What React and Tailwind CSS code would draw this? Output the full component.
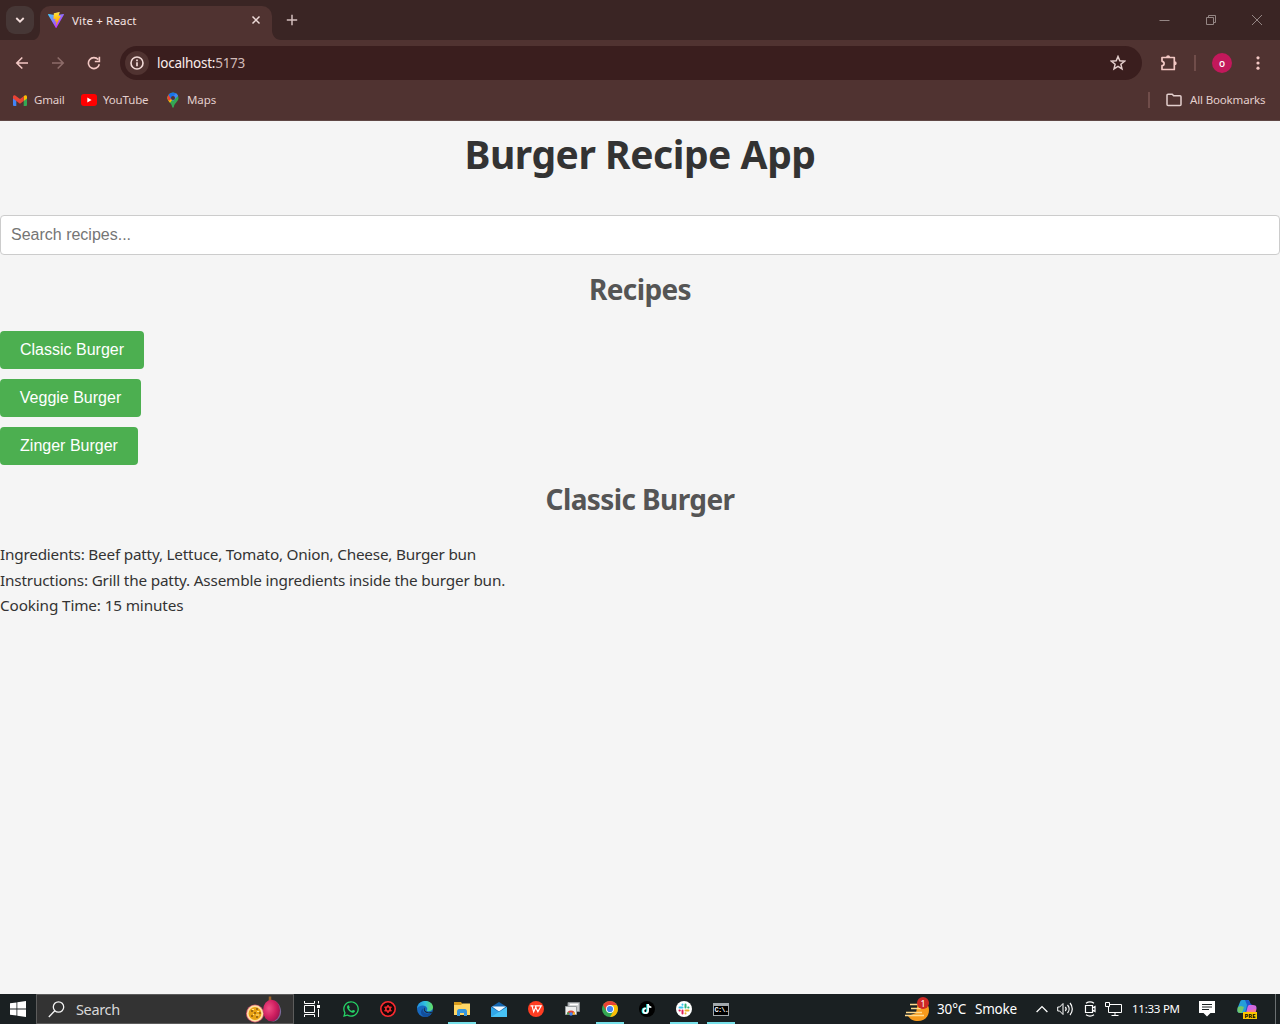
import React from "react";
import { FaWhatsapp, FaTiktok } from "react-icons/fa";

const UI = "font-['Noto_Sans','Open_Sans',sans-serif]";

function Svg({ w, h = w, vb, className = "", children }) {
  return (
    <svg width={w} height={h} viewBox={vb || `0 0 ${w} ${h}`} fill="none" className={`block shrink-0 ${className}`}>
      {children}
    </svg>
  );
}

function ViteLogo() {
  return (
    <Svg w={16} vb="0 0 32 32">
      <defs>
        <linearGradient id="va" x1="0" y1="4" x2="20" y2="28" gradientUnits="userSpaceOnUse">
          <stop stopColor="#41d1ff" />
          <stop offset="1" stopColor="#bd34fe" />
        </linearGradient>
        <linearGradient id="vb" x1="16" y1="1" x2="19" y2="20" gradientUnits="userSpaceOnUse">
          <stop stopColor="#ffea83" />
          <stop offset=".1" stopColor="#ffdd35" />
          <stop offset="1" stopColor="#ffa800" />
        </linearGradient>
      </defs>
      <path d="M31.8 5.3 17 31.4a1 1 0 0 1-1.6 0L.2 5.3a.9.9 0 0 1 1-1.3L16 6.6 30.8 4a.9.9 0 0 1 1 1.3Z" fill="url(#va)" />
      <path d="m23 .1-11 2.2a.4.4 0 0 0-.3.4L11 14c0 .3.2.5.5.4l3-.7c.3 0 .6.2.5.5l-1 4.5c0 .3.2.6.6.5l1.9-.6c.3 0 .6.2.5.5l-1.4 7c-.1.5.5.7.7.3l.2-.3 9-18c.2-.3-.1-.6-.5-.6l-3.2.6c-.3 0-.6-.2-.5-.5L23.4.6c0-.3-.1-.6-.4-.5Z" fill="url(#vb)" />
    </Svg>
  );
}

function TabStrip() {
  return (
    <div className="flex h-10 shrink-0 items-start bg-[#3a2524]">
      <div className="ml-[6px] mt-[6px] flex h-7 w-7 items-center justify-center rounded-[9px] bg-[#463736]">
        <Svg w={10} h={6}>
          <path d="m1.300 1 3.700 3.700L8.700 1" stroke="#f3dedc" strokeWidth="1.800" />
        </Svg>
      </div>
      <div className="flex h-10 w-[6px] items-end">
        <Svg w={6} h={10}>
          <path d="M6 0v10H0c3.500-1 6-5 6-10Z" fill="#503331" />
        </Svg>
      </div>
      <div className="mt-[6px] flex h-[34px] w-[232px] items-start rounded-t-[10px] bg-[#503331] pl-2 pr-[11px]">
        <div className="mt-[6px]">
          <ViteLogo />
        </div>
        <span className="ml-2 mt-[6px] flex-1 whitespace-nowrap text-[11.5px] leading-[18px] tracking-[0.15px] text-[#f5e3e1]">Vite + React</span>
        <Svg w={10} className="mt-[9px]">
          <path d="m1.500 1.500 7 7m0-7-7 7" stroke="#eedbd9" strokeWidth="1.500" />
        </Svg>
      </div>
      <div className="flex h-10 w-[9px] items-end">
        <Svg w={9} h={10}>
          <path d="M0 0v10h9C4 10 0 6 0 0Z" fill="#503331" />
        </Svg>
      </div>
      <Svg w={12} className="ml-[5px] mt-[14px]">
        <path d="M6 .8v10.400M.8 6h10.400" stroke="#d4bfbd" strokeWidth="1.500" />
      </Svg>
      <div className="mr-[17px] mt-[14px] flex flex-1 justify-end gap-[35px]">
        <Svg w={11} h={12}>
          <path d="M.5 6.500h10" stroke="#948684" />
        </Svg>
        <Svg w={11} h={12}>
          <path d="M1.500 3.500h7v7h-7zM3.500 3V1.500h7v7H9" stroke="#948684" />
        </Svg>
        <Svg w={12}>
          <path d="m1 1 10 10M11 1 1 11" stroke="#948684" />
        </Svg>
      </div>
    </div>
  );
}

function Toolbar() {
  return (
    <div className="flex h-[46px] shrink-0 items-center pr-[14px]">
      <Svg w={14} className="ml-[15px]">
        <path d="M13 7H2m5.300-5.500L1.800 7l5.500 5.500" stroke="#f3c8c4" strokeWidth="1.600" />
      </Svg>
      <Svg w={14} className="ml-[22px]">
        <path d="M1 7h11M6.700 1.500 12.200 7l-5.500 5.500" stroke="#8d6c69" strokeWidth="1.600" />
      </Svg>
      <Svg w={14} className="ml-[22px]">
        <path d="M12.300 8.300A5.500 5.500 0 1 1 11.200 3.600M12.400 .8v4.700H7.800" stroke="#f3c8c4" strokeWidth="1.600" />
      </Svg>
      <div className="ml-[19px] flex h-[34px] w-[1022px] items-center rounded-full bg-[#3a1e1e] pl-[5px] pr-4">
        <div className="flex h-6 w-6 items-center justify-center rounded-full bg-[#503331]">
          <Svg w={14}>
            <circle cx="7" cy="7" r="6" stroke="#f1dad7" strokeWidth="1.600" />
            <path d="M7 6.300v4M7 3.600v1.600" stroke="#f1dad7" strokeWidth="1.700" />
          </Svg>
        </div>
        <span className="ml-[8px] flex-1 text-[13.5px] leading-5 tracking-[-0.25px] text-[#fbeceb]">
          localhost:<span className="text-[#d1bab8]">5173</span>
        </span>
        <Svg w={16}>
          <path d="m8 1.500 1.800 4.300 4.700.4-3.600 3.100 1.100 4.600L8 11.400l-4 2.500 1.100-4.600-3.600-3.100 4.700-.4z" stroke="#e3cecc" strokeWidth="1.500" />
        </Svg>
      </div>
      <Svg w={18} className="ml-[18px]">
        <path d="M2 3.500h12.300v12H2v-3.800c2.800-.3 2.800-4.100 0-4.400z" stroke="#f3c8c4" strokeWidth="1.700" strokeLinejoin="round" />
        <path d="M6.100 3.200a2 2 0 0 1 4 0zM14.700 7.300a2 2 0 0 1 0 4z" fill="#f3c8c4" />
      </Svg>
      <div className="ml-4 h-4 w-[2px] bg-[#704d4a]" />
      <div className="ml-4 flex h-5 w-5 items-center justify-center rounded-full bg-[#c2185b] pb-px text-[10px] font-medium leading-none text-white">o</div>
      <Svg w={4} h={14} className="ml-6">
        <circle cx="2" cy="1.800" r="1.600" fill="#f3c8c4" />
        <circle cx="2" cy="7" r="1.600" fill="#f3c8c4" />
        <circle cx="2" cy="12.200" r="1.600" fill="#f3c8c4" />
      </Svg>
    </div>
  );
}

function Bookmarks() {
  return (
    <div className="flex h-[35px] shrink-0 items-center whitespace-nowrap border-b border-[#5f4745] pb-[6px] text-[11.5px] leading-4 text-[#e3cfcd]">
      <Svg w={14} h={11} className="ml-[13px]">
        <path d="M0 1.500V10a1 1 0 0 0 1 1h2.300V5z" fill="#4285f4" />
        <path d="M10.700 11H13a1 1 0 0 0 1-1V1.500L10.700 5z" fill="#34a853" />
        <path d="M10.700 1.200V6L14 3.500V1.800C14 .2 12.200-.4 10.700 1.200Z" fill="#fbbc04" />
        <path d="M0 3.500V1.800C0 .2 1.800-.4 3.300 1.200L7 4l3.700-2.800V6L7 8.800 3.300 6z" fill="#ea4335" />
      </Svg>
      <span className="ml-[7px] w-[31px] tracking-[-0.200px]">Gmail</span>
      <Svg w={16} h={12} className="ml-[16px]">
        <rect width="16" height="12" rx="3" fill="red" />
        <path d="m6.300 3.500 4.300 2.500-4.300 2.500z" fill="#fff" />
      </Svg>
      <span className="ml-[6px] w-[46px] tracking-[-0.150px]">YouTube</span>
      <Svg w={12} h={16} className="ml-[18px]">
        <clipPath id="pin">
          <path d="M6 .5A5.500 5.500 0 0 0 .5 6c0 3.500 4 4.800 4.700 9 .2.9 1.400.9 1.600 0 .7-4.200 4.700-5.500 4.700-9A5.500 5.500 0 0 0 6 .5Z" />
        </clipPath>
        <g clipPath="url(#pin)">
          <path fill="#34a853" d="M0 0h12v16H0z" />
          <path fill="#fbbc04" d="M0 4h6v3L2 12 0 9z" />
          <path fill="#ea4335" d="M0 7V2l2-1 4 4-4 4z" />
          <path fill="#1a73e8" d="m1 2 3-2h8L4 7z" />
          <path fill="#4285f4" d="m4 7 6-7 2 3-6 6z" />
        </g>
        <circle cx="6" cy="6" r="2" fill="#503331" />
      </Svg>
      <span className="ml-[8px] tracking-[-0.100px]">Maps</span>
      <div className="ml-auto h-4 w-[2px] bg-[#704d4a]" />
      <Svg w={16} h={14} className="ml-4">
        <path d="M1 2.200a1 1 0 0 1 1-1h4.200l1.500 1.600H14a1 1 0 0 1 1 1v7.700a1 1 0 0 1-1 1H2a1 1 0 0 1-1-1z" stroke="#e3cfcd" strokeWidth="1.500" />
      </Svg>
      <span className="ml-2 mr-[14px] w-[76px] tracking-[-0.150px]">All Bookmarks</span>
    </div>
  );
}

function RecipeButton({ children, width }) {
  return (
    <button className={`block h-[38px] rounded-[4px] bg-[#4caf50] pb-px text-center text-[16px] leading-[18px] text-white ${width}`}>
      {children}
    </button>
  );
}

function Page() {
  return (
    <main className={`flex-1 bg-[#f5f5f5] text-[#333] ${UI}`}>
      <h1 className="flex h-[94px] items-start justify-center pt-px text-[39px] font-bold leading-[64px] tracking-[-0.460px] text-[#333]">Burger Recipe App</h1>
      <input
        placeholder="Search recipes..."
        className="block h-10 w-full rounded-[4px] border border-[#ccc] bg-white px-[10px] pb-px font-['Liberation_Sans',Arial,sans-serif] text-[16px] placeholder-[#757575] outline-none"
      />
      <h2 className="flex h-[76px] justify-center pt-[11px] text-[28px] font-bold leading-[46px] tracking-[-0.6px] text-[#555]">Recipes</h2>
      <div className="flex flex-col items-start gap-[10px] font-['Liberation_Sans',Arial,sans-serif]">
        <RecipeButton width="w-[144px]">Classic Burger</RecipeButton>
        <RecipeButton width="w-[141px]">Veggie Burger</RecipeButton>
        <RecipeButton width="w-[138px]">Zinger Burger</RecipeButton>
      </div>
      <h2 className="flex h-[77px] justify-center pt-[11px] text-[28px] font-bold leading-[46px] tracking-[-0.6px] text-[#555]">Classic Burger</h2>
      <div className="whitespace-nowrap text-[15.3px] leading-[25.6px] text-[#333]">
        <p className="tracking-[-0.210px]">Ingredients: Beef patty, Lettuce, Tomato, Onion, Cheese, Burger bun</p>
        <p className="tracking-[-0.180px]">Instructions: Grill the patty. Assemble ingredients inside the burger bun.</p>
        <p className="tracking-[-0.140px]">Cooking Time: 15 minutes</p>
      </div>
    </main>
  );
}

function TaskItem({ active = false, children }) {
  return (
    <div className="flex h-[30px] w-[37px] flex-col items-center">
      <div className="flex h-7 w-7 items-center justify-center pt-[2px]">{children}</div>
      <div className={active ? "h-[2px] w-7 bg-[#76dfe8]" : "h-[2px] w-7"} />
    </div>
  );
}

function Fruit() {
  return (
    <Svg w={36} h={28}>
      <defs>
        <radialGradient id="fruit" cx=".35" cy=".4" r=".7">
          <stop stopColor="#ef4f86" />
          <stop offset=".6" stopColor="#cf1f60" />
          <stop offset="1" stopColor="#9c1550" />
        </radialGradient>
      </defs>
      <path d="M24 6V1.500" stroke="#9c6229" strokeWidth="2.500" />
      <path d="M29 6c6 3 8 12 4 17-2 3-5 4-8 3z" fill="#7d6a9a" />
      <ellipse cx="25.500" cy="15.500" rx="8.500" ry="10.800" fill="url(#fruit)" />
      <circle cx="9" cy="18.500" r="9" fill="#c94f6c" />
      <circle cx="9" cy="18.500" r="8.200" fill="#ffe0a2" />
      <circle cx="9" cy="18.500" r="6.400" fill="#e9a313" />
      <path d="M5 16h2m3-2h2m1 4h2M8 18h2m-5 3h2m3 1h2" stroke="#8b5a10" strokeWidth="1.500" />
      <path d="M6 14.500h2m3 2h2m-3 3.500h3m-6-.5h1" stroke="#ffe28a" strokeWidth="1.200" />
    </Svg>
  );
}

function Taskbar() {
  return (
    <footer className={`flex h-[30px] shrink-0 items-center overflow-hidden bg-[#1a2022] text-white ${UI}`}>
      <Svg w={16} className="ml-[10px]">
        <path d="M0 2.300 6.500 1.400v6.200H0zM7.300 1.300 16 0v7.600H7.300zM0 8.400h6.500v6.200L0 13.700zM7.300 8.400H16V16l-8.700-1.300z" fill="#fff" />
      </Svg>
      <div className="ml-[10px] flex h-[30px] w-[258px] items-center border border-[#5c5c5c] bg-[#333]">
        <Svg w={17} className="ml-[11px]">
          <circle cx="10.500" cy="6" r="5.200" stroke="#f4f4f4" strokeWidth="1.300" />
          <path d="m6.800 9.700-6 6.300" stroke="#f4f4f4" strokeWidth="1.300" />
        </Svg>
        <span className="ml-[11px] flex-1 text-[14.5px] leading-5 tracking-[-0.350px] text-[#d8d8d8]">Search</span>
        <div className="mr-[11px]">
          <Fruit />
        </div>
      </div>
      <div className="flex h-full w-[38px] items-center justify-center pr-[3px]">
        <Svg w={17} h={16}>
          <path d="M1.500 0v2.500h10V0M1.500 16v-2.500h10V16M1.500 4.500h10v7h-10zM15.500 0v2.500m0 5.500V16" stroke="#fff" />
          <path d="M14 4h3v3h-3z" fill="#fff" />
        </Svg>
      </div>
      <TaskItem>
        <FaWhatsapp size={18} color="#25d366" />
      </TaskItem>
      <TaskItem>
        <Svg w={16}>
          <circle cx="8" cy="8" r="7.200" fill="#170607" stroke="#fb2b30" strokeWidth="1.600" />
          <circle cx="8" cy="8" r="2.200" stroke="#fb2b30" strokeWidth="1.600" />
          <path d="M8 4v1.500m0 5V12M4.500 6l1.300.7m4.400 2.600 1.300.7M4.500 10l1.300-.7m4.400-2.600 1.300-.7" stroke="#fb2b30" strokeWidth="1.500" />
        </Svg>
      </TaskItem>
      <TaskItem>
        <Svg w={16}>
          <defs>
            <linearGradient id="edge" x1="1" y1="5" x2="16" y2="5" gradientUnits="userSpaceOnUse">
              <stop stopColor="#2394df" />
              <stop offset=".5" stopColor="#32c2dc" />
              <stop offset="1" stopColor="#65e05c" />
            </linearGradient>
          </defs>
          <circle cx="8" cy="8" r="8" fill="#1769bf" />
          <path d="M0 7.500C1-2.500 16-2 16 6.500c0 3-3.500 4.500-6 3.500-1-.5.500-1 .2-2.500C9.500 4 3 3 0 7.500Z" fill="url(#edge)" />
          <path d="M6 7.500c-1 4 3.500 6.500 8.500 5A8 8 0 0 1 8 16C3 14 3 9.500 6 7.500Z" fill="#124e9c" />
          <path d="M8.300 6.500c-1.600 1.300-.6 4.300 3 4.900 1.900.2 3.300-.3 4.200-1.100L14.500 12c-4 1.200-7.500-.8-7.700-3.500 0-.9.600-1.700 1.500-2Z" fill="#1a2022" />
        </Svg>
      </TaskItem>
      <TaskItem active>
        <Svg w={16} h={14}>
          <path d="M0 0h7l1.500 2H16v5H0z" fill="#d79b1d" />
          <path d="M0 3h7l1.500-1.500H16V13H0z" fill="#ffd766" />
          <path d="M3 14V9.500C3 8 4 7 5 7h6c1 0 2 1 2 2.500V14h-3v-3H6v3z" fill="#3796dd" />
        </Svg>
      </TaskItem>
      <TaskItem>
        <Svg w={16} h={15}>
          <path d="m0 5 8-5 8 5v10H0z" fill="#1364ae" />
          <path d="M1 4.500h14L8 9.500z" fill="#f1f8fc" />
          <path d="m0 5 8 5v5H0z" fill="#31a6e8" />
          <path d="m16 5-8 5-8 5h16z" fill="#47c2f5" />
        </Svg>
      </TaskItem>
      <TaskItem>
        <Svg w={16}>
          <circle cx="8" cy="8" r="8" fill="#ff3d22" />
          <path d="M2.500 4.800h3.200M4 4.800l1.700 6 2-4.500 2.200 4.500 3.300-6H7.200l1 2" stroke="#fff" strokeWidth="1.200" />
        </Svg>
      </TaskItem>
      <TaskItem>
        <Svg w={15} h={14}>
          <path d="M3 .5h11.500v9H3z" fill="#c8cbcd" stroke="#8b9093" />
          <path d="M5 2.500h8" stroke="#fff" strokeWidth="1.500" />
          <path d="M.5 4.500h11v8H.5z" fill="#eef0f0" stroke="#999ea0" />
          <path d="M2 12.500a4 4 0 0 1 8 0z" fill="#dc4438" />
          <path d="M2 12.500a4 4 0 0 1 1-2.800L5 12.500z" fill="#35a853" />
          <path d="M10 12.500a4 4 0 0 0-1-2.800L7 12.500z" fill="#fbc116" />
          <circle cx="6" cy="12" r="1.700" fill="#4285f4" />
        </Svg>
      </TaskItem>
      <TaskItem active>
        <Svg w={16}>
          <circle cx="8" cy="8" r="8" fill="#34a853" />
          <path d="M8 8 1.100 4A8 8 0 0 1 14.900 4z" fill="#ea4335" />
          <path d="m1.100 4 3.400 6L8 4z" fill="#ea4335" />
          <path d="M14.900 4A8 8 0 0 1 8 16l3.500-6L8 4z" fill="#fbbc05" />
          <circle cx="8" cy="8" r="4" fill="#fff" />
          <circle cx="8" cy="8" r="3.100" fill="#4285f4" />
        </Svg>
      </TaskItem>
      <TaskItem>
        <div className="flex h-4 w-4 items-center justify-center rounded-full bg-black">
          <FaTiktok size={10} color="#fff" className="drop-shadow-[-0.7px_0px_0px_#25f4ee]" />
        </div>
      </TaskItem>
      <TaskItem active>
        <Svg w={16}>
          <circle cx="8" cy="8" r="8" fill="#fff" />
          <g strokeWidth="2" strokeLinecap="round">
            <path d="M6.500 3.500v.3M3.500 6.500h3" stroke="#36c5f0" />
            <path d="M9.500 3.500v3M12.500 6.500h-.3" stroke="#2eb67d" />
            <path d="M9.500 9.500h3M9.500 12.500v-.3" stroke="#ecb22e" />
            <path d="M6.500 9.500v3M3.500 9.500h.3" stroke="#e01e5a" />
          </g>
        </Svg>
      </TaskItem>
      <TaskItem active>
        <div className="h-[13px] w-4 border border-[#a2a9ad] border-t-[3px] bg-black pl-px font-['Liberation_Mono',monospace] text-[7px] font-bold leading-[8px] tracking-[-0.800px]">C:\.</div>
      </TaskItem>
      <div className="ml-auto flex items-center">
        <div className="relative">
          <Svg w={24} h={24}>
            <path d="M13 5c7-1 11 2 11 8 0 7-5 11-11 11-5 0-8-2-10-5l8-3z" fill="#f79a1c" />
            <path d="M5 7.500h9M6 11.500h10M1 15.500h16M0 18.500h19" stroke="#ffd98d" strokeWidth="1.700" />
          </Svg>
          <div className="absolute left-[12px] top-0 flex h-3 w-3 items-center justify-center rounded-full bg-[#ce2925] text-[9px] leading-none">1</div>
        </div>
        <span className="ml-[8px] w-[30px] whitespace-nowrap text-[13.5px] leading-5 tracking-[-0.150px]">30°C</span>
        <span className="ml-[8px] w-[42px] text-[13.5px] leading-5 tracking-[-0.250px]">Smoke</span>
        <Svg w={12} h={8} className="ml-[19px]">
          <path d="m.6 7 5.400-5.400L11.400 7" stroke="#fff" strokeWidth="1.300" />
        </Svg>
        <Svg w={17} h={14} className="ml-[9px]">
          <path d="M.7 5h2L6 1.500v11L2.700 9h-2z" stroke="#fff" />
          <path d="M8.300 5a3 3 0 0 1 0 4M10.500 3a6 6 0 0 1 0 8M13 1a9 9 0 0 1 0 12" stroke="#fff" strokeWidth="1.200" />
        </Svg>
        <Svg w={12} h={16} className="ml-[10px]">
          <path d="M1.500 4.500h7v7h-7zM8.500 7l2.500-1.500v5L8.500 9M2 2.200c2.500-1.700 5.500-1.700 8 0M2 13.800c2.500 1.700 5.500 1.700 8 0" stroke="#fff" strokeWidth="1.200" />
        </Svg>
        <Svg w={17} h={14} className="ml-[9px]">
          <path d="M5 2.500h11.500v8H3.500V5M.5.500h4v4h-4zM10 11v2.500m-3.500 0h7" stroke="#fff" />
        </Svg>
        <span className="ml-[10px] w-[49px] whitespace-nowrap text-[11.5px] leading-4 tracking-[-0.250px]">11:33 PM</span>
        <Svg w={16} className="ml-[18px]">
          <path d="M0 0h16v12h-4.500L8 15.500 4.500 12H0z" fill="#fff" />
          <path d="M3 3.500h10M3 6h10M3 8.500h7" stroke="#1a2022" />
        </Svg>
        <div className="relative ml-[22px] h-5 w-[21px]">
          <Svg w={21} h={20}>
            <path d="M5 1h5c3 0 3 2 2 5L9 14H3c-3 0-3-3-2-6l2-5c.4-1.200 1-2 2-2Z" fill="#259ed9" />
            <path d="m1 8 3-1 3 1-2 6H3C0 14 0 11 1 8Z" fill="#70c86c" />
            <path d="M8 1h2c3 0 3 5 6 5h-4L9 14H8l2-8z" fill="#1e57cb" />
            <path d="M12 6h4c4 0 4 3 3 6l-1 3H8c2 0 2-9 4-9Z" fill="#d268df" />
            <path d="m10 12 9-2-1 5H9z" fill="#f47895" />
          </Svg>
          <div className="absolute left-[6px] top-[13px] flex h-[7px] w-[14px] items-center justify-center bg-[#fdc500] text-[6px] font-bold leading-none text-black">PRE</div>
        </div>
        <div className="ml-[17px] mr-1 h-[30px] w-px bg-[#6b7072]" />
      </div>
    </footer>
  );
}

export default function App() {
  return (
    <div className={`flex h-screen w-[1280px] flex-col overflow-hidden ${UI}`}>
      <header className="flex h-[121px] shrink-0 flex-col bg-[#503331]">
        <TabStrip />
        <Toolbar />
        <Bookmarks />
      </header>
      <Page />
      <Taskbar />
    </div>
  );
}
